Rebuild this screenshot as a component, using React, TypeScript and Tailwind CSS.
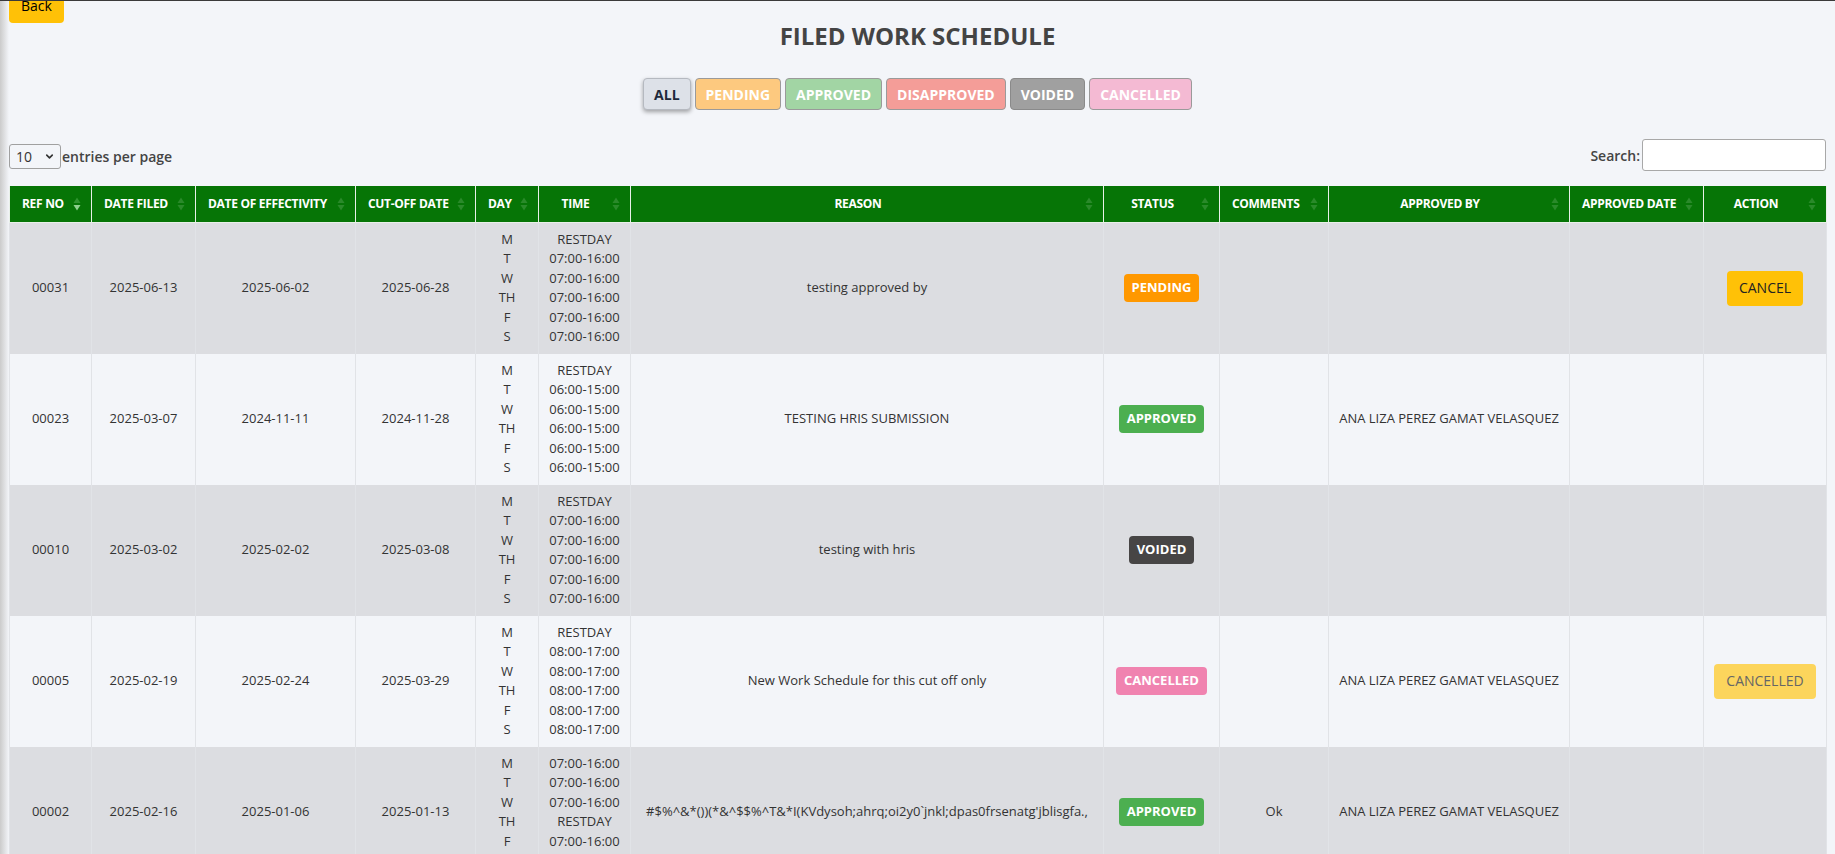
import React from 'react';
import { ChevronDown } from 'lucide-react';

const filters = [
  { label: 'ALL', cls: 'bg-[#dde1e8] text-[#1e293b] border-[#b5b9c0] shadow-[0_2px_4px_rgba(0,0,0,0.35)]' },
  { label: 'PENDING', cls: 'bg-[#fdc97f] text-white border-[#9a9a9a]' },
  { label: 'APPROVED', cls: 'bg-[#a2d5a4] text-white border-[#9a9a9a]' },
  { label: 'DISAPPROVED', cls: 'bg-[#f49d98] text-white border-[#9a9a9a]' },
  { label: 'VOIDED', cls: 'bg-[#a0a0a0] text-white border-[#8a8a8a]' },
  { label: 'CANCELLED', cls: 'bg-[#f4bad3] text-white border-[#9a9a9a]' },
];

const columns = [
  { label: 'REF NO', width: 82, active: true },
  { label: 'DATE FILED', width: 104 },
  { label: 'DATE OF EFFECTIVITY', width: 160 },
  { label: 'CUT-OFF DATE', width: 120 },
  { label: 'DAY', width: 63 },
  { label: 'TIME', width: 92 },
  { label: 'REASON', width: 473 },
  { label: 'STATUS', width: 116 },
  { label: 'COMMENTS', width: 109 },
  { label: 'APPROVED BY', width: 241 },
  { label: 'APPROVED DATE', width: 134 },
  { label: 'ACTION', width: 123 },
];

const statusStyle: Record<string, string> = {
  PENDING: 'bg-[#ff9800]',
  APPROVED: 'bg-[#4caf50]',
  VOIDED: 'bg-[#474545]',
  CANCELLED: 'bg-[#f083b0]',
};

const approver = 'ANA LIZA PEREZ GAMAT VELASQUEZ';

const rows = [
  {
    ref: '00031', filed: '2025-06-13', effective: '2025-06-02', cutoff: '2025-06-28',
    days: ['M', 'T', 'W', 'TH', 'F', 'S'],
    times: ['RESTDAY', '07:00-16:00', '07:00-16:00', '07:00-16:00', '07:00-16:00', '07:00-16:00'],
    reason: 'testing approved by', status: 'PENDING', comments: '', approvedBy: '', action: 'cancel',
  },
  {
    ref: '00023', filed: '2025-03-07', effective: '2024-11-11', cutoff: '2024-11-28',
    days: ['M', 'T', 'W', 'TH', 'F', 'S'],
    times: ['RESTDAY', '06:00-15:00', '06:00-15:00', '06:00-15:00', '06:00-15:00', '06:00-15:00'],
    reason: 'TESTING HRIS SUBMISSION', status: 'APPROVED', comments: '', approvedBy: approver, action: '',
  },
  {
    ref: '00010', filed: '2025-03-02', effective: '2025-02-02', cutoff: '2025-03-08',
    days: ['M', 'T', 'W', 'TH', 'F', 'S'],
    times: ['RESTDAY', '07:00-16:00', '07:00-16:00', '07:00-16:00', '07:00-16:00', '07:00-16:00'],
    reason: 'testing with hris', status: 'VOIDED', comments: '', approvedBy: '', action: '',
  },
  {
    ref: '00005', filed: '2025-02-19', effective: '2025-02-24', cutoff: '2025-03-29',
    days: ['M', 'T', 'W', 'TH', 'F', 'S'],
    times: ['RESTDAY', '08:00-17:00', '08:00-17:00', '08:00-17:00', '08:00-17:00', '08:00-17:00'],
    reason: 'New Work Schedule for this cut off only', status: 'CANCELLED', comments: '', approvedBy: approver, action: 'cancelled',
  },
  {
    ref: '00002', filed: '2025-02-16', effective: '2025-01-06', cutoff: '2025-01-13',
    days: ['M', 'T', 'W', 'TH', 'F', 'S'],
    times: ['07:00-16:00', '07:00-16:00', '07:00-16:00', 'RESTDAY', '07:00-16:00', '07:00-16:00'],
    reason: "#$%^&*())(*&^$$%^T&*I(KVdysoh;ahrq;oi2y0`jnkl;dpas0frsenatg'jblisgfa.,",
    status: 'APPROVED', comments: 'Ok', approvedBy: approver, action: '',
  },
];

const SortIcon = ({ active }: { active?: boolean }) => (
  <svg width="8" height="14" viewBox="0 0 8 14" className="absolute right-[10px] top-1/2 -translate-y-1/2">
    <path d="M4 0.5 L7.5 6 L0.5 6 Z" fill={active ? '#2f942f' : '#2a8a2a'} />
    <path d="M4 13.5 L7.5 8 L0.5 8 Z" fill={active ? '#8fd08f' : '#2a8a2a'} />
  </svg>
);

const Lines = ({ items }: { items: string[] }) => (
  <div className="flex flex-col">
    {items.map((t, i) => (
      <span key={i}>{t}</span>
    ))}
  </div>
);

export default function App() {
  return (
    <div className="min-h-screen bg-[#f3f5f9] font-['Open_Sans',sans-serif] text-[#333]">
      <div className="h-px bg-[#3a3a3a]" />
      <div className="flex">
        <div className="w-[9px] shrink-0 bg-gradient-to-r from-[#cbcbcb] to-[#f3f5f9]" />
        <div className="flex-1 min-w-0 pr-[9px] overflow-hidden">
          <div className="flex h-[22px] items-start">
            <button className="-mt-[13px] h-[35px] px-3 rounded-[4px] bg-[#ffc107] text-[14px] text-black">
              Back
            </button>
          </div>
          <h1 className="-mt-[2px] text-center text-[24px] leading-[30px] font-bold text-[#444]">
            FILED WORK SCHEDULE
          </h1>

          <div className="mt-[27px] flex justify-center gap-[4px]">
            {filters.map((f) => (
              <button
                key={f.label}
                className={`h-[32px] px-[10px] border rounded-[4px] text-[14px] font-bold ${f.cls}`}
              >
                {f.label}
              </button>
            ))}
          </div>

          <div className="mt-[29px] h-[32px] flex items-center justify-between">
            <div className="flex items-center">
              <div className="w-[52px] h-[25px] mt-[3px] border border-[#a0a0a0] rounded-[3px] flex items-center justify-between pl-[6px] pr-[5px] text-[14px] text-[#333]">
                <span>10</span>
                <ChevronDown size={11} strokeWidth={3.5} className="text-[#333]" />
              </div>
              <span className="ml-[1px] mt-[3px] text-[14px] font-semibold text-[#444]">entries per page</span>
            </div>
            <div className="flex items-center">
              <span className="text-[14px] font-semibold text-[#444] mr-[2px]">Search:</span>
              <input className="w-[184px] h-[32px] border border-[#a8a8a8] rounded-[3px] bg-white" />
            </div>
          </div>

          <table className="mt-[15px] w-[1817px] table-fixed border-collapse">
            <colgroup>
              {columns.map((c) => (
                <col key={c.label} style={{ width: c.width }} />
              ))}
            </colgroup>
            <thead>
              <tr className="bg-[#067506]">
                {columns.map((c) => (
                  <th
                    key={c.label}
                    className="relative h-[36px] pl-3 pr-[30px] text-center text-[12px] font-bold text-white tracking-[-0.3px] border-x border-b border-[#e8f0e8] whitespace-nowrap"
                  >
                    {c.label}
                    <SortIcon active={c.active} />
                  </th>
                ))}
              </tr>
            </thead>
            <tbody>
              {rows.map((r, i) => (
                <tr key={r.ref} className={i % 2 === 0 ? 'bg-[#dcdde1]' : 'bg-[#f3f5f9]'}>
                  {[
                    r.ref,
                    r.filed,
                    r.effective,
                    r.cutoff,
                    <Lines items={r.days} />,
                    <Lines items={r.times} />,
                    r.reason,
                    <span className={`inline-flex h-[28px] items-center px-2 rounded-[4px] text-white font-bold ${statusStyle[r.status]}`}>
                      {r.status}
                    </span>,
                    r.comments,
                    r.approvedBy,
                    '',
                    r.action === 'cancel' ? (
                      <button className="h-[35px] px-3 rounded-[4px] bg-[#ffc107] text-[14px] text-[#222]">CANCEL</button>
                    ) : r.action === 'cancelled' ? (
                      <button className="h-[35px] px-3 rounded-[4px] bg-[#fcd55c] text-[14px] text-[#666]">CANCELLED</button>
                    ) : (
                      ''
                    ),
                  ].map((cell, j) => (
                    <td
                      key={j}
                      className="py-[7px] px-[10px] text-center align-middle text-[13px] leading-[19.5px] text-[#333] border-x border-[#e1e3e7] whitespace-nowrap overflow-hidden"
                    >
                      {cell}
                    </td>
                  ))}
                </tr>
              ))}
            </tbody>
          </table>
        </div>
      </div>
    </div>
  );
}
